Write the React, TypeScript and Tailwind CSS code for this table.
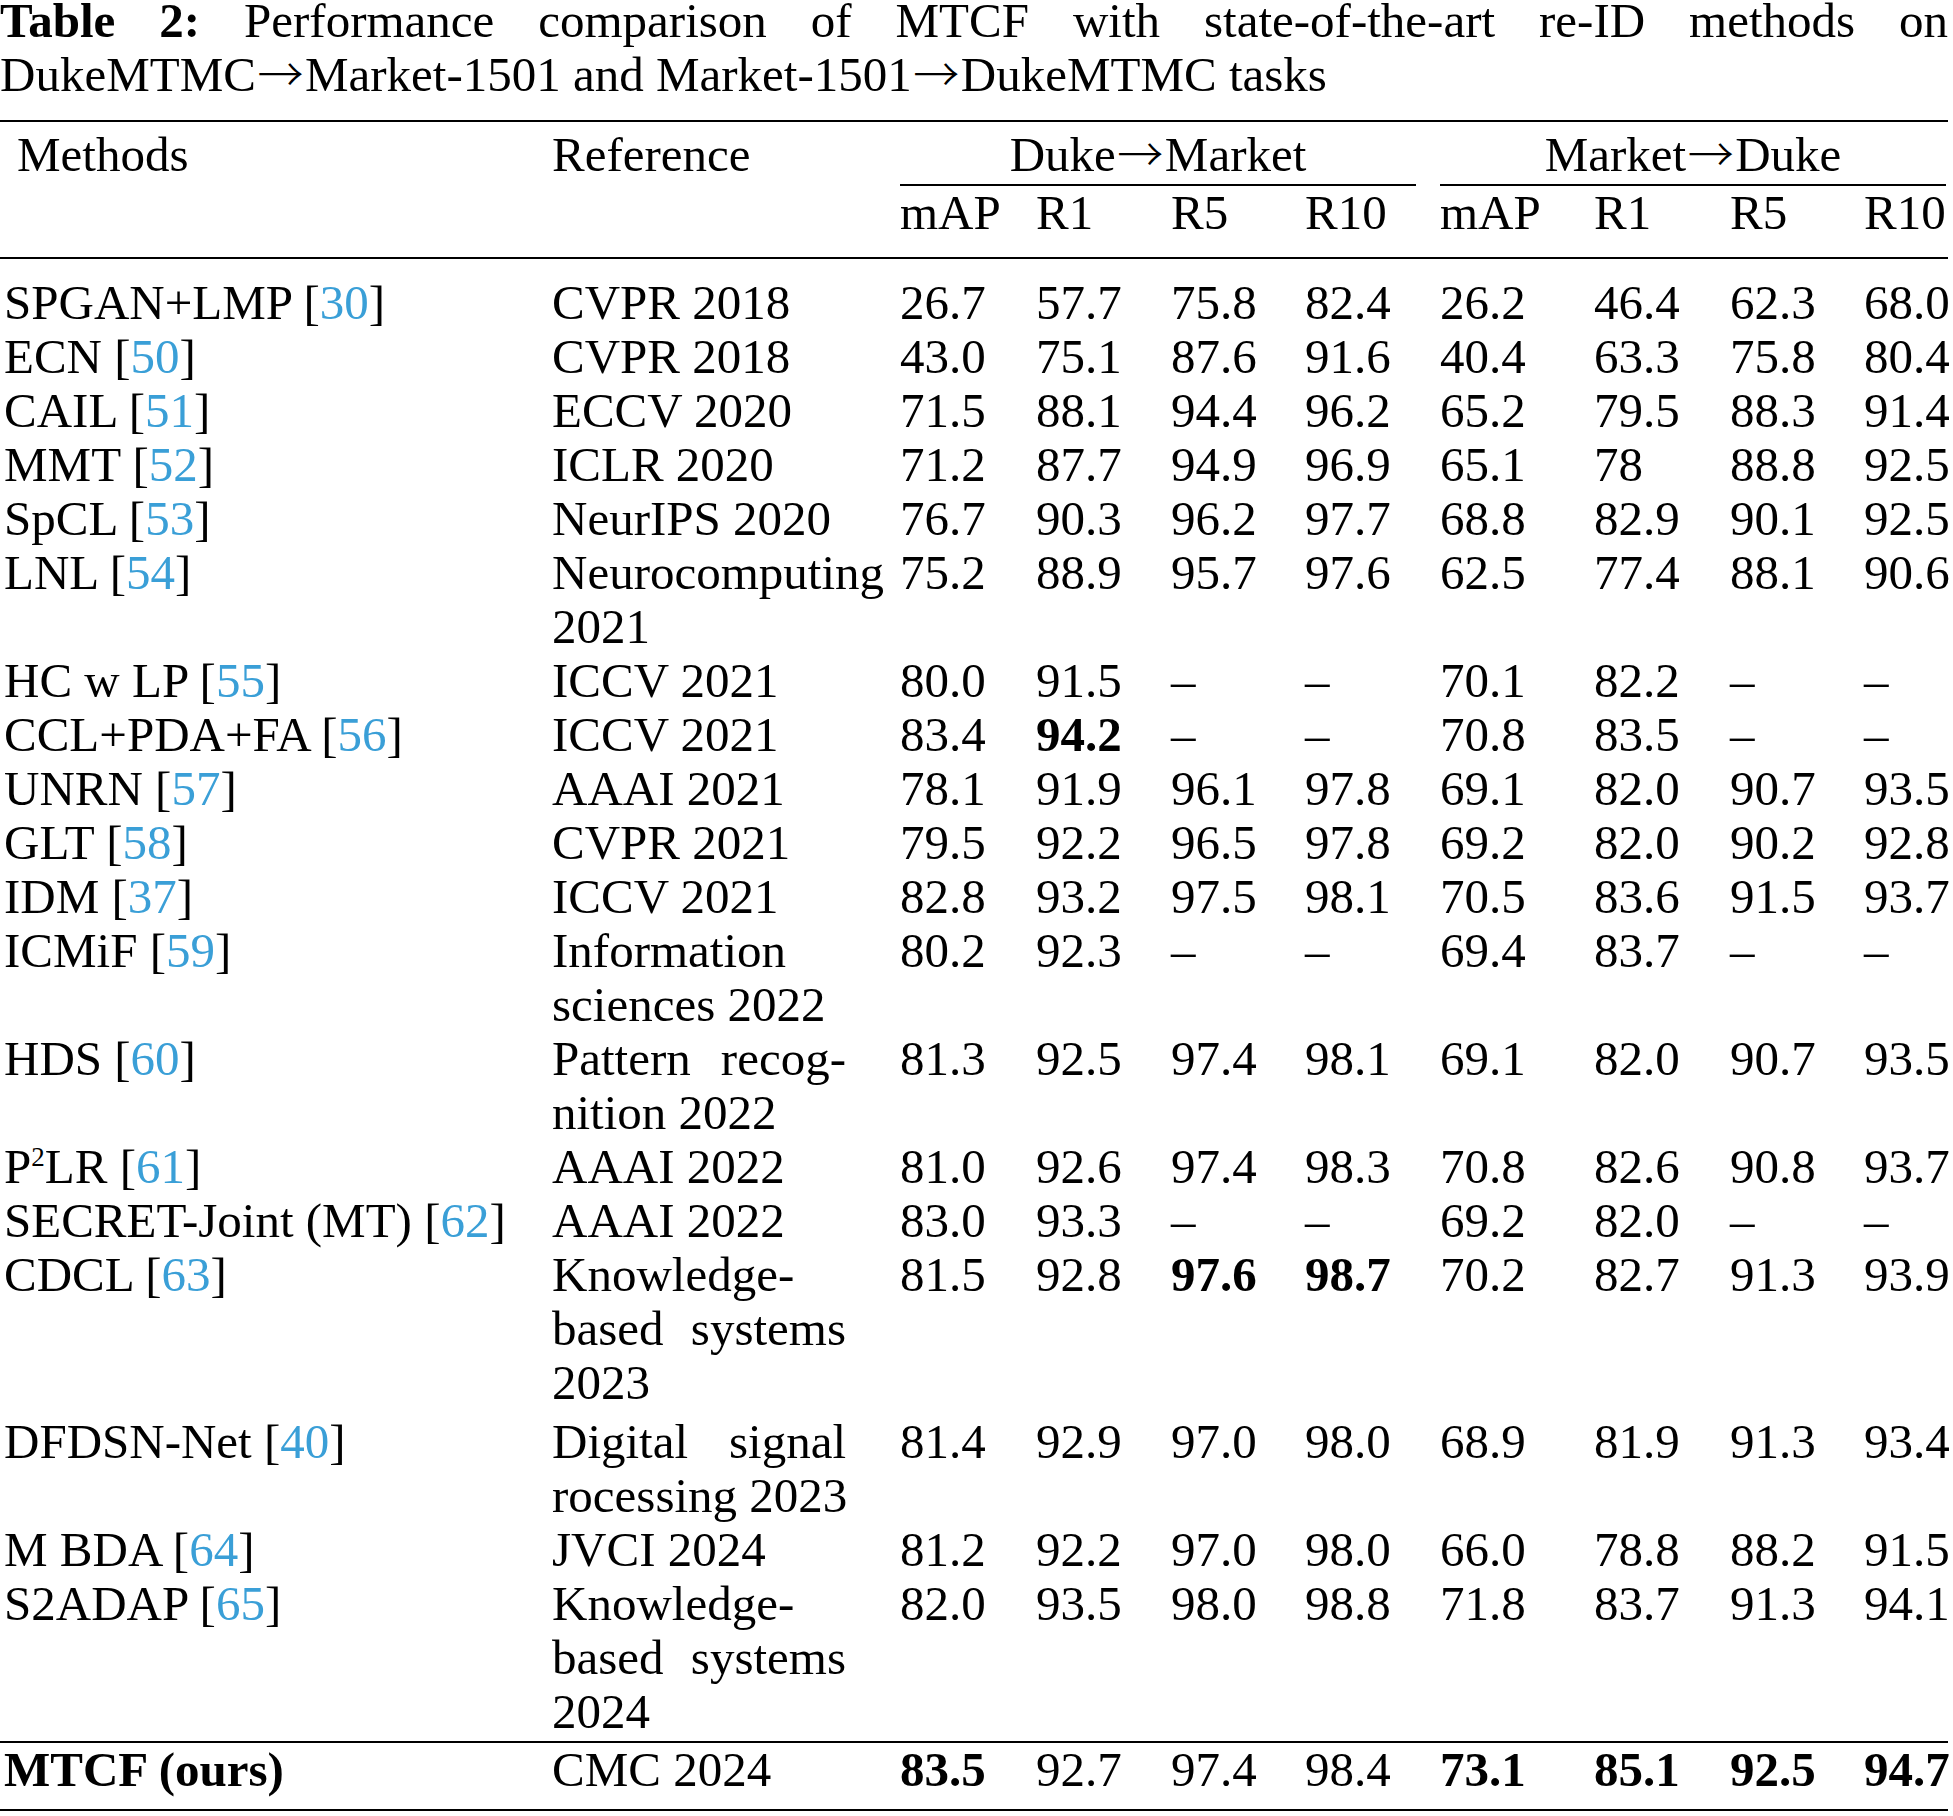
import React from "react";

type Line = string | string[];

type Row = {
  method: string;
  sup?: string;
  rest?: string;
  cite: string;
  ref: Line[];
  vals: string[];
  bold?: number[];
  gap?: boolean;
};

const rows: Row[] = [
  { method: "SPGAN+LMP", cite: "30", ref: ["CVPR 2018"], vals: ["26.7", "57.7", "75.8", "82.4", "26.2", "46.4", "62.3", "68.0"] },
  { method: "ECN", cite: "50", ref: ["CVPR 2018"], vals: ["43.0", "75.1", "87.6", "91.6", "40.4", "63.3", "75.8", "80.4"] },
  { method: "CAIL", cite: "51", ref: ["ECCV 2020"], vals: ["71.5", "88.1", "94.4", "96.2", "65.2", "79.5", "88.3", "91.4"] },
  { method: "MMT", cite: "52", ref: ["ICLR 2020"], vals: ["71.2", "87.7", "94.9", "96.9", "65.1", "78", "88.8", "92.5"] },
  { method: "SpCL", cite: "53", ref: ["NeurIPS 2020"], vals: ["76.7", "90.3", "96.2", "97.7", "68.8", "82.9", "90.1", "92.5"] },
  { method: "LNL", cite: "54", ref: ["Neurocomputing", "2021"], vals: ["75.2", "88.9", "95.7", "97.6", "62.5", "77.4", "88.1", "90.6"] },
  { method: "HC w LP", cite: "55", ref: ["ICCV 2021"], vals: ["80.0", "91.5", "–", "–", "70.1", "82.2", "–", "–"] },
  { method: "CCL+PDA+FA", cite: "56", ref: ["ICCV 2021"], vals: ["83.4", "94.2", "–", "–", "70.8", "83.5", "–", "–"], bold: [1] },
  { method: "UNRN", cite: "57", ref: ["AAAI 2021"], vals: ["78.1", "91.9", "96.1", "97.8", "69.1", "82.0", "90.7", "93.5"] },
  { method: "GLT", cite: "58", ref: ["CVPR 2021"], vals: ["79.5", "92.2", "96.5", "97.8", "69.2", "82.0", "90.2", "92.8"] },
  { method: "IDM", cite: "37", ref: ["ICCV 2021"], vals: ["82.8", "93.2", "97.5", "98.1", "70.5", "83.6", "91.5", "93.7"] },
  { method: "ICMiF", cite: "59", ref: ["Information", "sciences 2022"], vals: ["80.2", "92.3", "–", "–", "69.4", "83.7", "–", "–"] },
  { method: "HDS", cite: "60", ref: [["Pattern", "recog-"], "nition 2022"], vals: ["81.3", "92.5", "97.4", "98.1", "69.1", "82.0", "90.7", "93.5"] },
  { method: "P", sup: "2", rest: "LR", cite: "61", ref: ["AAAI 2022"], vals: ["81.0", "92.6", "97.4", "98.3", "70.8", "82.6", "90.8", "93.7"] },
  { method: "SECRET-Joint (MT)", cite: "62", ref: ["AAAI 2022"], vals: ["83.0", "93.3", "–", "–", "69.2", "82.0", "–", "–"] },
  { method: "CDCL", cite: "63", ref: ["Knowledge-", ["based", "systems"], "2023"], vals: ["81.5", "92.8", "97.6", "98.7", "70.2", "82.7", "91.3", "93.9"], bold: [2, 3] },
  { method: "DFDSN-Net", cite: "40", ref: [["Digital", "signal"], "rocessing 2023"], vals: ["81.4", "92.9", "97.0", "98.0", "68.9", "81.9", "91.3", "93.4"], gap: true },
  { method: "M BDA", cite: "64", ref: ["JVCI 2024"], vals: ["81.2", "92.2", "97.0", "98.0", "66.0", "78.8", "88.2", "91.5"] },
  { method: "S2ADAP", cite: "65", ref: ["Knowledge-", ["based", "systems"], "2024"], vals: ["82.0", "93.5", "98.0", "98.8", "71.8", "83.7", "91.3", "94.1"] },
];

const cols = "grid grid-cols-[548px_348px_136px_135px_134px_135px_154px_136px_134px_1fr] pl-[4px]";

function Arrow() {
  return (
    <span
      className="inline-block w-[49px] text-center text-[46px] leading-none font-light"
      style={{ fontFamily: '"Noto Sans CJK JP", sans-serif' }}
    >
      →
    </span>
  );
}

function RefCell({ lines }: { lines: Line[] }) {
  return (
    <div className="w-[294px] whitespace-nowrap">
      {lines.map((l, i) =>
        Array.isArray(l) ? (
          <div key={i} className="flex justify-between">
            {l.map((w) => (
              <span key={w}>{w}</span>
            ))}
          </div>
        ) : (
          <div key={i}>{l}</div>
        )
      )}
    </div>
  );
}

function MethodCell({ row }: { row: Row }) {
  return (
    <div className="whitespace-nowrap">
      {row.method}
      {row.sup && <sup className="relative -top-[17px] align-baseline text-[27px] leading-none">{row.sup}</sup>}
      {row.rest}
      {" "}[<span className="text-[#3a9fd7]">{row.cite}</span>]
    </div>
  );
}

export default function App() {
  return (
    <div
      className="w-[1953px] min-h-[1816px] overflow-hidden bg-white text-[49px] leading-[54px] text-black"
      style={{ fontFamily: '"Liberation Serif", "Times New Roman", serif' }}
    >
      <div className="w-[1948px]">
        {/* Caption */}
        <div className="-mt-[6px]">
          <div className="text-justify [text-align-last:justify]">
            <span className="font-bold">Table 2:</span> Performance comparison of MTCF with state-of-the-art re-ID methods on
          </div>
          <div>
            DukeMTMC<Arrow />Market-1501 and Market-1501<Arrow />DukeMTMC tasks
          </div>
        </div>

        {/* Header */}
        <div className="mt-[18px] border-t-2 border-black pt-[6px]">
          <div className={cols}>
            <div className="row-span-2 pl-[13px]">Methods</div>
            <div className="row-span-2">Reference</div>
            <div className="col-span-4">
              <div className="mr-[24px] h-[58px] border-b-2 border-black text-center">
                Duke<Arrow />Market
              </div>
            </div>
            <div className="col-span-4">
              <div className="mr-[2px] h-[58px] border-b-2 border-black text-center">
                Market<Arrow />Duke
              </div>
            </div>
            {["mAP", "R1", "R5", "R10", "mAP", "R1", "R5", "R10"].map((h, i) => (
              <div key={i} className="pt-[3px] leading-[48px]">
                {h}
              </div>
            ))}
          </div>
        </div>

        {/* Body */}
        <div className="mt-[20px] border-t-2 border-black pt-[17px]">
          {rows.map((r) => (
            <div key={r.method + r.cite} className={`${cols} ${r.gap ? "mt-[5px]" : ""}`}>
              <MethodCell row={r} />
              <RefCell lines={r.ref} />
              {r.vals.map((v, i) => (
                <div key={i} className={r.bold?.includes(i) ? "font-bold" : ""}>
                  {v}
                </div>
              ))}
            </div>
          ))}
        </div>

        {/* Ours */}
        <div className="mt-[2px] border-y-2 border-black pt-[4px] pb-[16px] leading-[46px]">
          <div className={cols}>
            <div className="font-bold">MTCF (ours)</div>
            <div>CMC 2024</div>
            <div className="font-bold">83.5</div>
            <div>92.7</div>
            <div>97.4</div>
            <div>98.4</div>
            <div className="font-bold">73.1</div>
            <div className="font-bold">85.1</div>
            <div className="font-bold">92.5</div>
            <div className="font-bold">94.7</div>
          </div>
        </div>
      </div>
    </div>
  );
}
